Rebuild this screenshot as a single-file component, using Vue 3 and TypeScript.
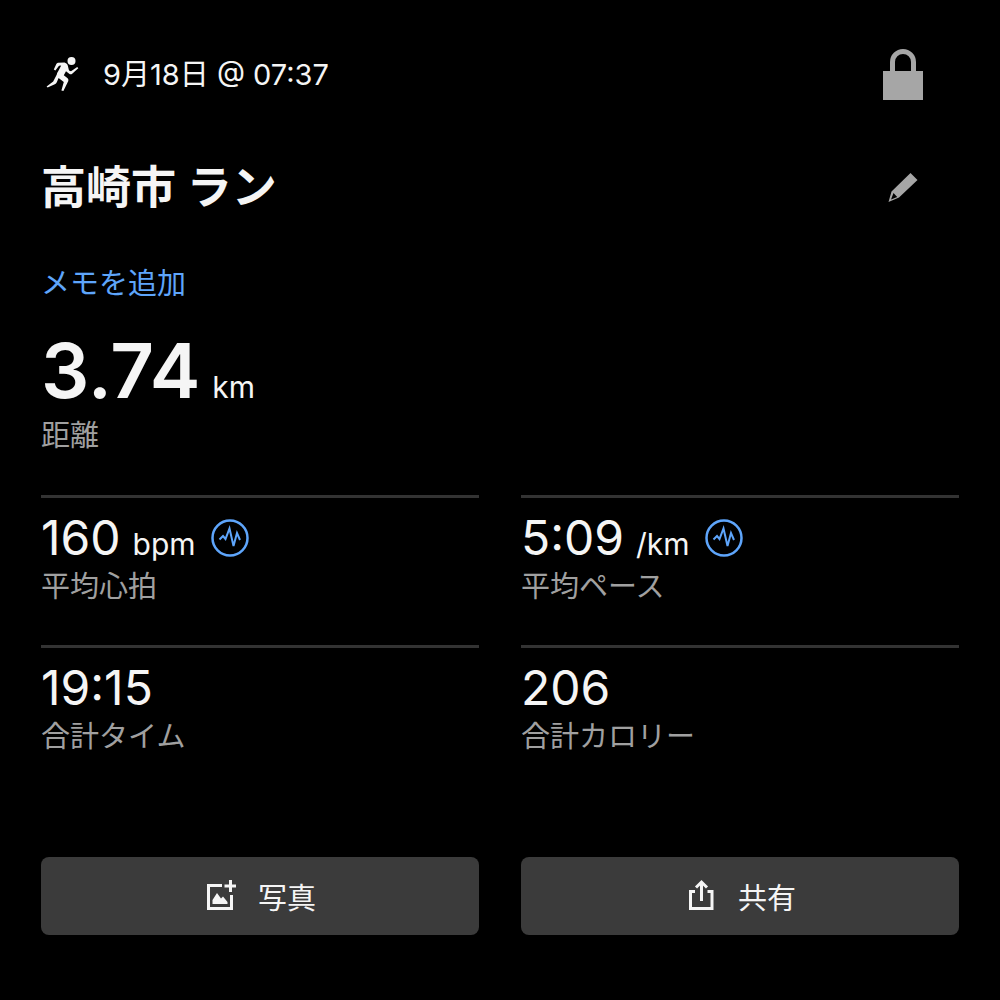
<script setup lang="ts">
interface Metric {
  id: string
  value: string
  unit?: string
  label: string
  trend: boolean
}

const metrics: Metric[] = [
  { id: 'heart', value: '160', unit: 'bpm', label: '平均心拍', trend: true },
  { id: 'pace', value: '5:09', unit: '/km', label: '平均ペース', trend: true },
  { id: 'time', value: '19:15', label: '合計タイム', trend: false },
  { id: 'calories', value: '206', label: '合計カロリー', trend: false },
]
</script>

<template>
  <main class="workout">
    <header class="top">
      <svg class="runner" viewBox="0 0 36 36" aria-hidden="true">
        <circle cx="26.500" cy="4" r="4" />
        <path d="M13 5.800 L19.500 5.600 Q22.800 6.800 23 9.500 L24 13.600 L26 14.200 L32.200 10 L33.300 11.200 L27.200 16.800 Q25.800 17.800 24.200 16.800 L21 14.200 L18.800 18.200 L22.600 21.200 Q23.800 22.200 23.300 24 L18.400 34 L16.400 33.600 L18.800 25 L13.600 21 L11.800 25.200 Q11.200 26.600 9.800 27.200 L2.600 30.600 L1.600 29.400 L8.200 24.600 L11.800 17.400 Q12.200 15.400 13.600 13.400 L16.200 8.600 L14 8.800 L10.400 13.400 L8.800 12.600 L11.200 7.200 Q11.800 6 13 5.800 Z" />
      </svg>
      <time class="date">9月18日 @ 07:37</time>
      <button class="icon-button" type="button" aria-label="公開範囲">
        <svg class="lock" viewBox="0 0 40 52" aria-hidden="true">
          <path d="M9.500 24 V13 A10.500 10.500 0 0 1 30.500 13 V24" fill="none" stroke="currentColor" stroke-width="5" />
          <path d="M0 22 H40 V51 H0 Z" fill="currentColor" />
        </svg>
      </button>
    </header>

    <div class="title-row">
      <h1 class="title">高崎市 ラン</h1>
      <button class="icon-button" type="button" aria-label="タイトルを編集">
        <svg class="pencil" viewBox="0 0 30 30" aria-hidden="true">
          <path fill-rule="evenodd" d="M22.500 0 L29.500 7 L11 24.500 L0.500 29 L3.500 18.500 Z M5.500 20 L3 26.500 L9.200 24 Z" />
        </svg>
      </button>
    </div>

    <a class="memo" href="#memo">メモを追加</a>

    <section class="distance">
      <p class="distance-value"><span>3.74</span><span class="unit">km</span></p>
      <p class="label">距離</p>
    </section>

    <section class="metrics">
      <div v-for="metric in metrics" :key="metric.id" class="metric">
        <div class="reading">
          <p class="value">
            <span>{{ metric.value }}</span>
            <span v-if="metric.unit" class="unit">{{ metric.unit }}</span>
          </p>
          <svg v-if="metric.trend" class="trend" viewBox="0 0 38 38" aria-hidden="true">
            <circle cx="19" cy="19" r="17.500" stroke-width="2.500" />
            <path d="M8.500 20.500 L12 17 L14.500 20 L18.500 9.500 L22.500 27 L26 14 L29 21" stroke-width="2" />
          </svg>
        </div>
        <p class="label">{{ metric.label }}</p>
      </div>
    </section>

    <div class="actions">
      <button class="action" type="button">
        <svg class="action-icon" viewBox="0 0 32 32" aria-hidden="true">
          <path d="M18 5.500 H4.500 V28.500 H27.500 V15" fill="none" stroke="currentColor" stroke-width="3" />
          <path d="M26.500 0 V12 M20.500 6 H32" fill="none" stroke="currentColor" stroke-width="3" />
          <path d="M8.500 24 V20 L13 13 L17 18.500 L19 16.500 L23.500 22 V24 Z" fill="currentColor" />
        </svg>
        <span>写真</span>
      </button>
      <button class="action" type="button">
        <svg class="action-icon" viewBox="0 0 32 32" aria-hidden="true">
          <path d="M11 11.500 H6.500 V28.500 H28 V11.500 H23.500 M17.500 21 V2 M12 7.500 L17.500 2 L23 7.500" fill="none" stroke="currentColor" stroke-width="3" />
        </svg>
        <span>共有</span>
      </button>
    </div>
  </main>
</template>

<style>
body {
  margin: 0;
  background: #000;
}
</style>

<style scoped>
.workout {
  box-sizing: border-box;
  padding: 46px 41px 65px;
  background: #000;
  color: #f5f5f5;
  font-family: Inter, "Noto Sans CJK JP", sans-serif;
  font-size: 29px;
}

p,
h1 {
  margin: 0;
}

button {
  border: 0;
  padding: 0;
  color: inherit;
  font: inherit;
  cursor: pointer;
}

svg {
  display: block;
  flex: none;
  overflow: visible;
}

.top {
  display: flex;
  align-items: center;
  height: 58px;
}

.runner {
  width: 36px;
  height: 36px;
  margin: 0 22px 0 4px;
  fill: currentColor;
}

.date {
  line-height: 40px;
}

.icon-button {
  display: flex;
  justify-content: center;
  width: 40px;
  margin: 0 36px 0 auto;
  background: none;
  color: #a6a6a6;
}

.lock {
  width: 40px;
  height: 52px;
}

.title-row {
  display: flex;
  align-items: center;
  margin-top: 54px;
}

.title {
  font-size: 45px;
  font-weight: 700;
  line-height: 60px;
}

.pencil {
  width: 30px;
  height: 30px;
  fill: currentColor;
}

.memo {
  display: block;
  width: fit-content;
  margin-top: 46px;
  color: #5ea5fb;
  line-height: 40px;
  text-decoration: none;
}

.distance {
  margin-top: 24px;
}

.distance-value {
  display: flex;
  align-items: baseline;
  gap: 12px;
  font-size: 76px;
  font-weight: 600;
  line-height: 84px;
}

.distance .label {
  margin-top: 4px;
}

.unit {
  font-size: 30px;
  font-weight: 400;
  line-height: 40px;
}

.label {
  color: #a0a0a0;
  line-height: 40px;
}

.metrics {
  display: grid;
  grid-template-columns: 1fr 1fr;
  column-gap: 42px;
  margin-top: 39px;
}

.metric {
  box-sizing: border-box;
  height: 150px;
  padding-top: 11px;
  border-top: 3px solid #333;
}

.reading {
  display: flex;
  align-items: center;
  gap: 15px;
}

.value {
  display: flex;
  align-items: baseline;
  gap: 12px;
  font-size: 48px;
  line-height: 58px;
}

.trend {
  width: 38px;
  height: 38px;
  fill: none;
  stroke: #5ea5fb;
}

.actions {
  display: grid;
  grid-template-columns: 1fr 1fr;
  column-gap: 42px;
  margin-top: 62px;
}

.action {
  display: flex;
  align-items: center;
  justify-content: center;
  gap: 22px;
  height: 78px;
  border-radius: 8px;
  background: #3b3b3b;
}

.action-icon {
  width: 32px;
  height: 32px;
}
</style>
